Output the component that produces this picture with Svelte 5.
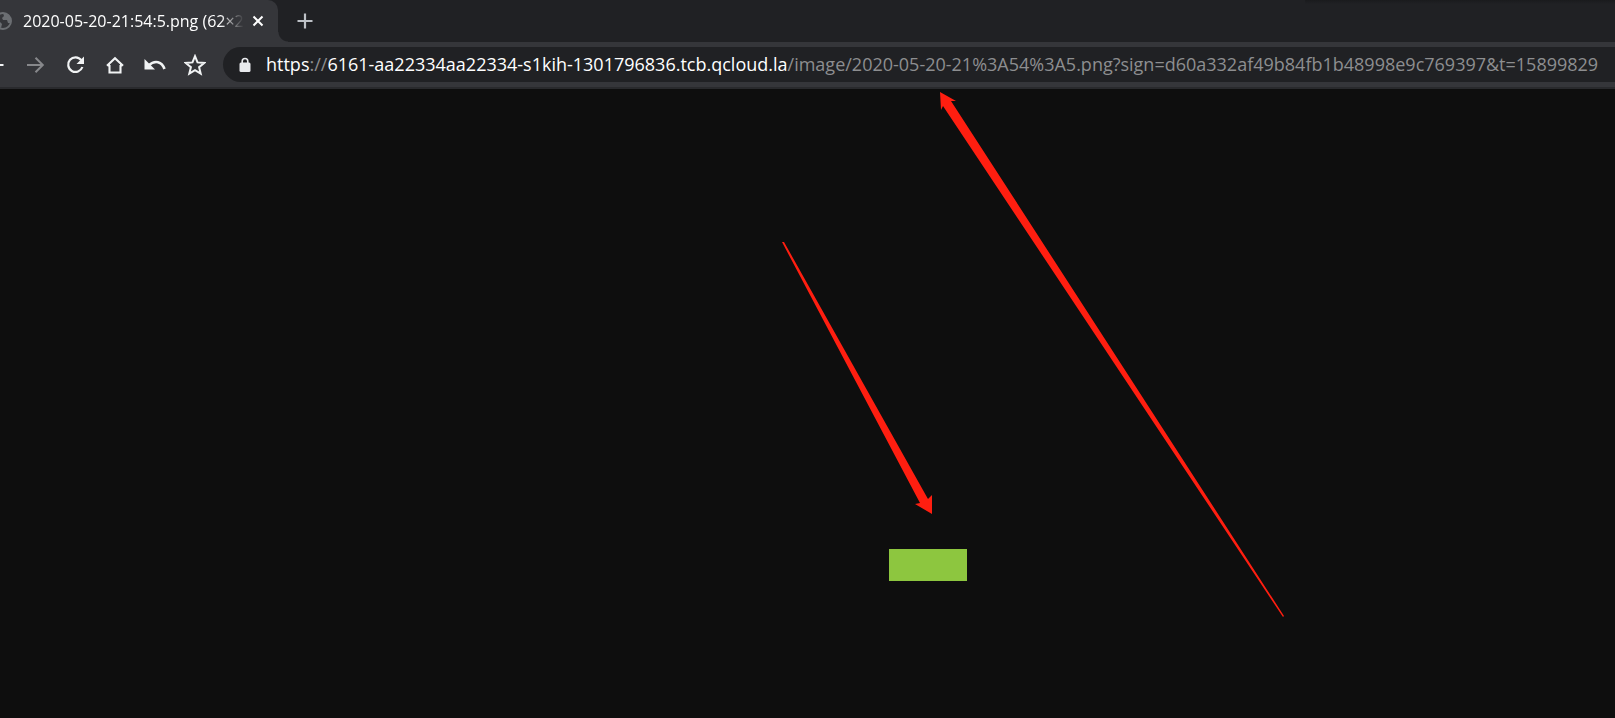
<script>
  let url = $state({
    scheme: "https",
    sep: "://",
    host: "6161-aa22334aa22334-s1kih-1301796836.tcb.qcloud.la",
    path: "/image/2020-05-20-21%3A54%3A5.png?sign=d60a332af49b84fb1b48998e9c769397&t=15899829",
  });
  let full = $derived(url.scheme + url.sep + url.host + url.path);

  const arrows = [
    "940,92 956,101 951,101 1284,616 1283,617 943,106 941,110",
    "782,242 784,242 928,499 932,495 932,514 915,504 920,503",
  ];
</script>

<div class="browser">
  <div class="tabs">
    <div class="tab">
      <svg class="globe" viewBox="0 0 18 18" width="18" height="18" aria-hidden="true">
        <circle cx="9" cy="9" r="8" fill="none" stroke="#6b6e72" stroke-width="2" />
        <path d="M1 7l5 3 2 2-1 4-4-2zM9 1l1 3-2 2 1 2 4 0 1 3 3 0 0-5-3-4z" fill="#6b6e72" />
      </svg>
      <span class="title">2020-05-20-21:54:5.png (62×2</span>
      <button class="close" aria-label="Close tab">
        <svg viewBox="0 0 12 12" width="12" height="12">
          <path d="M1.5 1.5l9 9M10.5 1.5l-9 9" stroke="#fff" stroke-width="2" />
        </svg>
      </button>
    </div>
    <button class="new-tab" aria-label="New tab">
      <svg viewBox="0 0 16 16" width="16" height="16">
        <path d="M8 .5v15M.5 8h15" stroke="#bdc1c6" stroke-width="2.2" />
      </svg>
    </button>
  </div>

  <div class="toolbar">
    <button aria-label="Back">
      <svg viewBox="0 0 20 20" width="20" height="20">
        <path d="M18.5 10H3M10 2.5L2.5 10l7.5 7.5" fill="none" stroke="#f1f3f4" stroke-width="2" />
      </svg>
    </button>
    <button aria-label="Forward">
      <svg viewBox="0 0 20 20" width="20" height="20">
        <path d="M2 10h15M10.5 2.7l7.3 7.3-7.3 7.3" fill="none" stroke="#87888b" stroke-width="2" />
      </svg>
    </button>
    <button aria-label="Reload">
      <svg viewBox="0 0 20 20" width="20" height="20">
        <path d="M16.3 5.2A7.3 7.3 0 1 0 17.4 12" fill="none" stroke="#f1f3f4" stroke-width="2.2" />
        <path d="M19 1.5V9h-7.5z" fill="#f1f3f4" />
      </svg>
    </button>
    <button aria-label="Home">
      <svg viewBox="0 0 20 20" width="20" height="20">
        <path d="M4.5 10v7.5h11V10M2 10.8l8-7.6 8 7.6M3 10.5h2M15 10.5h2" fill="none" stroke="#f1f3f4" stroke-width="2.1" />
      </svg>
    </button>
    <button aria-label="Undo">
      <svg viewBox="0 0 22 20" width="22" height="20">
        <path d="M.5 4v10.5H11z" fill="#f1f3f4" />
        <path d="M4.5 10.5C11 4.5 18 6.5 20.5 14" fill="none" stroke="#f1f3f4" stroke-width="2.6" />
      </svg>
    </button>
    <button aria-label="Bookmark this page">
      <svg viewBox="0 0 22 22" width="22" height="22">
        <path d="M11 2.2l2.5 6.2 6.7.5-5.1 4.3 1.6 6.5-5.7-3.5-5.7 3.5 1.6-6.5-5.1-4.3 6.7-.5z" fill="none" stroke="#f1f3f4" stroke-width="2" />
      </svg>
    </button>

    <label class="omnibox">
      <svg viewBox="0 0 12 16" width="12" height="16" aria-hidden="true">
        <path d="M3.2 7V4.3a2.8 2.8 0 0 1 5.6 0V7" fill="none" stroke="#e8eaed" stroke-width="1.6" />
        <rect x=".5" y="5.5" width="11" height="9.5" rx="1.5" fill="#e8eaed" />
      </svg>
      <span class="address">
        <input type="text" value={full} aria-label="Address" spellcheck="false" />
        <span class="url" aria-hidden="true"><b>{url.scheme}</b>{url.sep}<b>{url.host}</b>{url.path}</span>
      </span>
    </label>
  </div>

  <main>
    <div class="image" role="img" aria-label="2020-05-20-21:54:5.png"></div>
  </main>

  <svg class="marks" viewBox="0 0 1615 718" width="1615" height="718" aria-hidden="true">
    {#each arrows as points}
      <polygon {points} />
    {/each}
  </svg>
</div>

<style>
  :global(body) {
    margin: 0;
    background: #0e0e0e;
  }
  .browser {
    position: relative;
    min-height: 100vh;
    overflow: hidden;
    font-family: "Open Sans", "Noto Sans", sans-serif;
  }
  button {
    display: flex;
    align-items: center;
    justify-content: center;
    padding: 0;
    border: 0;
    background: none;
    cursor: pointer;
  }
  svg { flex: none; }

  .tabs {
    display: flex;
    height: 42px;
    background: linear-gradient(#1a1b1d, #202124) no-repeat right top / 310px 4px #202124;
  }
  .tab {
    position: relative;
    display: flex;
    align-items: center;
    box-sizing: border-box;
    width: 298px;
    margin-left: -20px;
    padding: 0 10px 0 14px;
    border-radius: 0 10px 0 0;
    background: #35363a;
  }
  /* curved foot where the tab meets the toolbar */
  .tab::after {
    content: "";
    position: absolute;
    left: 100%;
    bottom: 0;
    width: 10px;
    height: 10px;
    background: radial-gradient(circle at 100% 0, transparent 9px, #35363a 10px);
  }
  .title {
    flex: 1;
    margin-left: 11px;
    overflow: hidden;
    white-space: nowrap;
    font-size: 16px;
    line-height: 20px;
    color: #fff;
    mask-image: linear-gradient(to right, #000 calc(100% - 24px), transparent);
  }
  .close {
    width: 20px;
    height: 20px;
    margin-left: 4px;
  }
  .new-tab {
    width: 34px;
    margin-left: 10px;
  }

  .toolbar {
    display: flex;
    align-items: center;
    height: 45px;
    margin-left: -25px;
    background: #35363a;
    border-bottom: 2px solid #292a2d;
  }
  .toolbar button {
    flex: none;
    width: 40px;
    height: 36px;
  }
  .omnibox {
    flex: 1;
    display: flex;
    align-items: center;
    min-width: 0;
    height: 35px;
    margin-left: 8px;
    padding-left: 16px;
    border-radius: 18px 0 0 18px;
    background: #202124;
  }
  .address {
    flex: 1;
    display: grid;
    min-width: 0;
    margin-left: 15px;
    padding-bottom: 2px;
    overflow: hidden;
  }
  .address input,
  .url {
    grid-area: 1 / 1;
    min-width: 0;
    padding: 0;
    border: 0;
    outline: 0;
    font-family: inherit;
    font-size: 18px;
    line-height: 28px;
    white-space: nowrap;
  }
  .address input {
    background: none;
    color: transparent;
    caret-color: #fff;
  }
  .url {
    color: #8d8e90;
    pointer-events: none;
  }
  .url b {
    font-weight: 400;
    color: #fff;
  }

  main {
    display: flex;
    justify-content: center;
    padding: 460px 0 0 241px;
  }
  .image {
    width: 78px;
    height: 32px;
    background: #8dc63f;
  }
  .marks {
    position: absolute;
    top: 0;
    left: 0;
    pointer-events: none;
  }
  .marks polygon { fill: #ff1e10; }
</style>
